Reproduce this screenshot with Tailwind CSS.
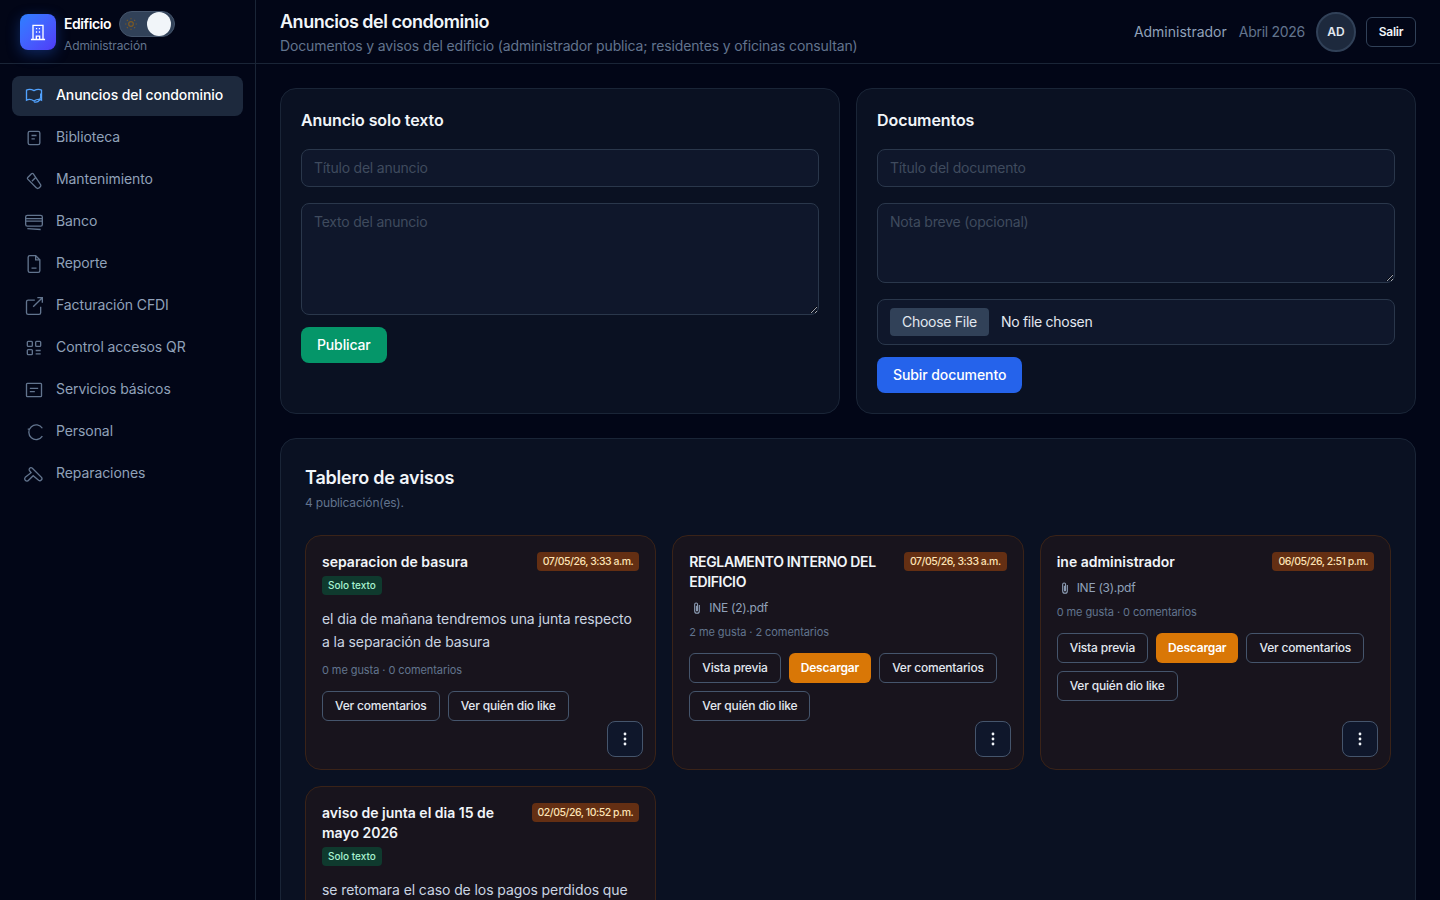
<!DOCTYPE html>
<html lang="es">
<head>
<meta charset="utf-8">
<title>Anuncios del condominio</title>
<script src="https://cdn.jsdelivr.net/npm/@tailwindcss/browser@4"></script>
</head>
<body class="h-[900px] overflow-hidden bg-[#020617] font-['Inter',sans-serif] text-slate-100">
<div class="flex h-[900px]">
  <aside class="flex w-[256px] shrink-0 flex-col border-r border-[#1a2537] bg-[#020617]">
    <div class="flex h-[64px] items-center gap-2 border-b border-[#1a2537] pl-5">
      <div class="flex h-9 w-9 items-center justify-center rounded-lg bg-gradient-to-br from-blue-500 to-indigo-600 shadow-[0_4px_14px_rgba(37,99,235,0.35)]">
        <svg class="h-5 w-5 text-white" fill="none" viewBox="0 0 24 24" stroke="currentColor" stroke-width="1.6"><path d="M6 21V4h12v17M3.500 21h17M9.500 8h1.500M13 8h1.500M9.500 12h1.500M13 12h1.500M10 21v-4h4v4"/></svg>
      </div>
      <div class="relative h-[40px] w-[130px]">
        <div class="absolute left-0 top-[2px] text-sm font-semibold tracking-[-0.03em] text-white">Edificio</div>
        <div class="absolute left-0 top-[26px] text-xs tracking-[-0.01em] text-slate-500">Administración</div>
        <div class="absolute left-[55px] top-[-1px] flex h-[26px] w-[56px] items-center justify-between rounded-full border border-slate-600 bg-slate-700 px-[3px]">
          <svg class="ml-[1px] h-[14px] w-[14px] text-[#7c5a22]" fill="none" viewBox="0 0 24 24" stroke="currentColor" stroke-width="2"><circle cx="12" cy="12" r="4"/><path d="M12 2v2M12 20v2M2 12h2M20 12h2M5 5l1.500 1.500M17.500 17.500 19 19M5 19l1.500-1.500M17.500 6.500 19 5"/></svg>
          <span class="h-6 w-6 rounded-full bg-slate-100"></span>
        </div>
      </div>
    </div>
    <nav class="flex flex-col gap-[2px] px-3 pt-3 text-sm tracking-[-0.006em] text-slate-400">
      <a class="flex h-10 items-center gap-3 rounded-lg bg-slate-800 px-3 font-medium text-white">
        <svg class="h-5 w-5 text-blue-400" fill="none" viewBox="0 0 24 24" stroke="currentColor" stroke-width="1.6"><path d="M3 5c3-1.500 6-1 9 .5 3-1.500 6-2 9-.5v12c-3-1.500-6-1-9 1-3-2-6-2.500-9-1z"/><path d="M20 9c1 6-2 12-8 10"/></svg>
        <span class="-mt-[2px]">Anuncios del condominio</span></a>
      <a class="flex h-10 items-center gap-3 px-3">
        <svg class="h-5 w-5 text-slate-500" fill="none" viewBox="0 0 24 24" stroke="currentColor" stroke-width="1.6"><rect x="5" y="4" width="14" height="16" rx="2"/><path d="M9 9h6M9 13h4"/></svg>
        <span class="-mt-[2px]">Biblioteca</span></a>
      <a class="flex h-10 items-center gap-3 px-3">
        <svg class="h-5 w-5 text-slate-500" fill="none" viewBox="0 0 24 24" stroke="currentColor" stroke-width="1.6"><path d="M9 4.500 4.500 9a1.500 1.500 0 0 0 0 2L15 21.500a2 2 0 0 0 3 0l1.500-1.500a2 2 0 0 0 0-3L11 4.500a1.500 1.500 0 0 0-2 0zM9.500 13.500 14 9"/></svg>
        <span class="-mt-[2px]">Mantenimiento</span></a>
      <a class="flex h-10 items-center gap-3 px-3">
        <svg class="h-5 w-5 text-slate-500" fill="none" viewBox="0 0 24 24" stroke="currentColor" stroke-width="1.6"><rect x="2" y="4" width="20" height="13" rx="2"/><path d="M2 8h20M2 11h20M4 20l16 1"/></svg>
        <span class="-mt-[2px]">Banco</span></a>
      <a class="flex h-10 items-center gap-3 px-3">
        <svg class="h-5 w-5 text-slate-500" fill="none" viewBox="0 0 24 24" stroke="currentColor" stroke-width="1.6"><path d="M14 2H7a2 2 0 0 0-2 2v16a2 2 0 0 0 2 2h10a2 2 0 0 0 2-2V7z"/><path d="M14 2v5h5M9 17h6"/></svg>
        <span class="-mt-[2px]">Reporte</span></a>
      <a class="flex h-10 items-center gap-3 px-3">
        <svg class="h-5 w-5 text-slate-500" fill="none" viewBox="0 0 24 24" stroke="currentColor" stroke-width="1.6"><path d="M13 5H5a2 2 0 0 0-2 2v13a2 2 0 0 0 2 2h13a2 2 0 0 0 2-2v-7M11 13 22 2M16 2h6v6"/></svg>
        <span class="-mt-[2px]">Facturación CFDI</span></a>
      <a class="flex h-10 items-center gap-3 px-3">
        <svg class="h-5 w-5 text-slate-500" fill="none" viewBox="0 0 24 24" stroke="currentColor" stroke-width="1.6"><rect x="4" y="4" width="6" height="6" rx="1"/><rect x="14" y="4" width="6" height="6" rx="1"/><rect x="4" y="14" width="6" height="6" rx="1"/><path d="M14 15h6M14 19h6"/></svg>
        <span class="-mt-[2px]">Control accesos QR</span></a>
      <a class="flex h-10 items-center gap-3 px-3">
        <svg class="h-5 w-5 text-slate-500" fill="none" viewBox="0 0 24 24" stroke="currentColor" stroke-width="1.6"><rect x="3" y="4" width="18" height="16" rx="1"/><path d="M7 10h10M7 14h6"/></svg>
        <span class="-mt-[2px]">Servicios básicos</span></a>
      <a class="flex h-10 items-center gap-3 px-3">
        <svg class="h-5 w-5 text-slate-500" fill="none" viewBox="0 0 24 24" stroke="currentColor" stroke-width="1.6"><path d="M22 7.500A8.800 8.800 0 1 0 22 17M4.500 8.500h2"/></svg>
        <span class="-mt-[2px]">Personal</span></a>
      <a class="flex h-10 items-center gap-3 px-3">
        <svg class="h-5 w-5 text-slate-500" fill="none" viewBox="0 0 24 24" stroke="currentColor" stroke-width="1.600"><path d="M10 5l11 11a2.500 2.500 0 0 1-3.500 3.500L11 14l-5.500 5.500A2.500 2.500 0 0 1 1.500 16L8.500 10.500 7 8.500A2.200 2.200 0 0 1 10 5z"/></svg>
        <span class="-mt-[2px]">Reparaciones</span></a>
    </nav>
  </aside>

  <div class="flex min-w-0 flex-1 flex-col">
    <header class="flex h-[64px] shrink-0 items-center justify-between border-b border-[#1a2537] bg-[#020617] pl-6 pr-6">
      <div class="pt-[2px]">
        <h1 class="text-lg font-semibold leading-6 tracking-[-0.027em] text-slate-100">Anuncios del condominio</h1>
        <p class="mt-[2px] text-sm leading-5 tracking-[-0.009em] text-slate-500">Documentos y avisos del edificio (administrador publica; residentes y oficinas consultan)</p>
      </div>
      <div class="flex items-center gap-3 text-sm">
        <span class="text-slate-400">Administrador</span>
        <span class="tracking-[-0.02em] text-slate-500">Abril 2026</span>
        <span class="ml-[-1px] flex h-10 w-10 items-center justify-center rounded-full border-2 border-slate-700 bg-slate-800 text-xs font-semibold text-slate-200">AD</span>
        <button class="ml-[-2px] h-[30px] w-[50px] rounded-md border border-slate-700 text-xs font-semibold tracking-[-0.02em] text-slate-100">Salir</button>
      </div>
    </header>

    <main class="flex-1 overflow-hidden p-6">
      <div class="grid grid-cols-2 gap-4">
        <section class="h-[326px] rounded-2xl border border-[#1a2537] bg-[#0a1122] p-5">
          <h2 class="mb-[18px] text-base font-semibold leading-[22px] tracking-[-0.005em] text-slate-100">Anuncio solo texto</h2>
          <input class="block h-[38px] w-full rounded-lg border border-[#2a374b] bg-slate-900 px-3 pb-[2px] text-sm tracking-[-0.015em] text-slate-100 placeholder:text-[#3f4b5e]" placeholder="Título del anuncio">
          <textarea class="mt-4 block h-[112px] w-full rounded-lg border border-[#2a374b] bg-slate-900 px-3 py-2 text-sm tracking-[-0.015em] placeholder:text-[#3f4b5e]" placeholder="Texto del anuncio"></textarea>
          <button class="mt-3 h-9 rounded-lg bg-[#059669] px-4 text-sm font-medium tracking-[-0.01em] text-white">Publicar</button>
        </section>
        <section class="h-[326px] rounded-2xl border border-[#1a2537] bg-[#0a1122] p-5">
          <h2 class="mb-[18px] text-base font-semibold leading-[22px] tracking-[-0.005em] text-slate-100">Documentos</h2>
          <input class="block h-[38px] w-full rounded-lg border border-[#2a374b] bg-slate-900 px-3 pb-[2px] text-sm tracking-[-0.015em] placeholder:text-[#3f4b5e]" placeholder="Título del documento">
          <textarea class="mt-4 block h-[80px] w-full rounded-lg border border-[#2a374b] bg-slate-900 px-3 py-2 text-sm tracking-[-0.015em] placeholder:text-[#3f4b5e]" placeholder="Nota breve (opcional)"></textarea>
          <div class="mt-4 flex h-[46px] items-center gap-3 rounded-lg border border-[#2a374b] bg-slate-900 px-3 text-sm tracking-[-0.02em] text-slate-200">
            <span class="flex h-7 items-center rounded bg-slate-700 px-3">Choose File</span>
            <span>No file chosen</span>
          </div>
          <button class="mt-3 h-9 rounded-lg bg-[#2563eb] px-4 text-sm font-medium tracking-[-0.006em] text-white">Subir documento</button>
        </section>
      </div>

      <section class="mt-6 h-[600px] rounded-2xl border border-[#1a2537] bg-[#0a1122] p-6">
        <h2 class="mt-[1px] text-lg font-semibold leading-7 tracking-[-0.01em] text-slate-100">Tablero de avisos</h2>
        <p class="mt-[1px] text-xs leading-5 tracking-[-0.014em] text-slate-500">4 publicación(es).</p>
        <div class="mt-[22px] grid grid-cols-3 gap-4">

          <article class="relative h-[235px] rounded-2xl border border-[#3a2318] bg-[#18141d] p-4">
            <div class="flex items-start justify-between gap-3">
              <h3 class="text-sm font-semibold leading-5 text-slate-100">separacion de basura</h3>
              <span class="shrink-0 rounded bg-[#642f13] px-[6px] py-[2px] text-[10.5px] font-medium leading-[15px] tracking-[-0.47px] text-[#fde3b5]">07/05/26, 3:33 a.m.</span>
            </div>
            <span class="mt-[4px] block w-fit rounded bg-[#0f3a2e] px-[6px] text-[10px] font-medium leading-[19px] text-[#a7f3d0]">Solo texto</span>
            <p class="mt-[12px] text-sm leading-[23px] tracking-[-0.09px] text-slate-300">el dia de mañana tendremos una junta respecto a la separación de basura</p>
            <p class="mt-[9px] text-[11px] leading-4 tracking-[-0.08px] text-slate-500">0 me gusta · 0 comentarios</p>
            <div class="mt-[13px] flex flex-wrap gap-2 tracking-[-0.18px]">
              <button class="h-[30px] rounded-md border border-slate-600 px-3 text-xs font-medium text-slate-200">Ver comentarios</button>
              <button class="h-[30px] rounded-md border border-slate-600 px-3 text-xs font-medium text-slate-200">Ver quién dio like</button>
            </div>
            <button class="absolute bottom-3 right-3 flex h-9 w-9 items-center justify-center rounded-lg border border-slate-600 bg-slate-900">
              <svg class="h-4 w-4 text-slate-100" fill="currentColor" viewBox="0 0 16 16"><circle cx="8" cy="3" r="1.400"/><circle cx="8" cy="8" r="1.400"/><circle cx="8" cy="13" r="1.400"/></svg>
            </button>
          </article>

          <article class="relative h-[235px] rounded-2xl border border-[#3a2318] bg-[#18141d] p-4">
            <div class="flex items-start justify-between gap-3">
              <h3 class="text-sm font-semibold leading-5 tracking-[-0.35px] text-slate-100">REGLAMENTO INTERNO DEL EDIFICIO</h3>
              <span class="shrink-0 rounded bg-[#642f13] px-[6px] py-[2px] text-[10.5px] font-medium leading-[15px] tracking-[-0.47px] text-[#fde3b5]">07/05/26, 3:33 a.m.</span>
            </div>
            <div class="mt-[6px] flex h-5 items-center gap-[5px] pl-[1px] text-xs tracking-[-0.27px] text-slate-400">
              <svg class="h-[14px] w-[14px]" fill="none" viewBox="0 0 24 24" stroke="currentColor" stroke-width="1.800"><path d="M16 7v10a4 4 0 0 1-8 0V6a2.500 2.500 0 0 1 5 0v10a1 1 0 0 1-2 0V8"/></svg>
              <span>INE (2).pdf</span>
            </div>
            <p class="mt-[6px] text-[11px] leading-4 tracking-[-0.08px] text-slate-500">2 me gusta · 2 comentarios</p>
            <div class="mt-[13px] flex flex-wrap gap-2 tracking-[-0.18px]">
              <button class="h-[30px] rounded-md border border-slate-600 px-3 text-xs font-medium text-slate-200">Vista previa</button>
              <button class="h-[30px] rounded-md bg-[#d97706] px-3 text-xs font-semibold text-white">Descargar</button>
              <button class="h-[30px] rounded-md border border-slate-600 px-3 text-xs font-medium text-slate-200">Ver comentarios</button>
              <button class="h-[30px] rounded-md border border-slate-600 px-3 text-xs font-medium text-slate-200">Ver quién dio like</button>
            </div>
            <button class="absolute bottom-3 right-3 flex h-9 w-9 items-center justify-center rounded-lg border border-slate-600 bg-slate-900">
              <svg class="h-4 w-4 text-slate-100" fill="currentColor" viewBox="0 0 16 16"><circle cx="8" cy="3" r="1.400"/><circle cx="8" cy="8" r="1.400"/><circle cx="8" cy="13" r="1.400"/></svg>
            </button>
          </article>

          <article class="relative h-[235px] rounded-2xl border border-[#3a2318] bg-[#18141d] p-4">
            <div class="flex items-start justify-between gap-3">
              <h3 class="text-sm font-semibold leading-5 text-slate-100">ine administrador</h3>
              <span class="shrink-0 rounded bg-[#642f13] px-[6px] py-[2px] text-[10.5px] font-medium leading-[15px] tracking-[-0.47px] text-[#fde3b5]">06/05/26, 2:51 p.m.</span>
            </div>
            <div class="mt-[6px] flex h-5 items-center gap-[5px] pl-[1px] text-xs tracking-[-0.27px] text-slate-400">
              <svg class="h-[14px] w-[14px]" fill="none" viewBox="0 0 24 24" stroke="currentColor" stroke-width="1.800"><path d="M16 7v10a4 4 0 0 1-8 0V6a2.500 2.500 0 0 1 5 0v10a1 1 0 0 1-2 0V8"/></svg>
              <span>INE (3).pdf</span>
            </div>
            <p class="mt-[6px] text-[11px] leading-4 tracking-[-0.08px] text-slate-500">0 me gusta · 0 comentarios</p>
            <div class="mt-[13px] flex flex-wrap gap-2 tracking-[-0.18px]">
              <button class="h-[30px] rounded-md border border-slate-600 px-3 text-xs font-medium text-slate-200">Vista previa</button>
              <button class="h-[30px] rounded-md bg-[#d97706] px-3 text-xs font-semibold text-white">Descargar</button>
              <button class="h-[30px] rounded-md border border-slate-600 px-3 text-xs font-medium text-slate-200">Ver comentarios</button>
              <button class="h-[30px] rounded-md border border-slate-600 px-3 text-xs font-medium text-slate-200">Ver quién dio like</button>
            </div>
            <button class="absolute bottom-3 right-3 flex h-9 w-9 items-center justify-center rounded-lg border border-slate-600 bg-slate-900">
              <svg class="h-4 w-4 text-slate-100" fill="currentColor" viewBox="0 0 16 16"><circle cx="8" cy="3" r="1.400"/><circle cx="8" cy="8" r="1.400"/><circle cx="8" cy="13" r="1.400"/></svg>
            </button>
          </article>

          <article class="relative h-[235px] rounded-2xl border border-[#3a2318] bg-[#18141d] p-4">
            <div class="flex items-start justify-between gap-3">
              <h3 class="text-sm font-semibold leading-5 text-slate-100">aviso de junta el dia 15 de mayo 2026</h3>
              <span class="shrink-0 rounded bg-[#642f13] px-[6px] py-[2px] text-[10.5px] font-medium leading-[15px] tracking-[-0.47px] text-[#fde3b5]">02/05/26, 10:52 p.m.</span>
            </div>
            <span class="mt-[4px] block w-fit rounded bg-[#0f3a2e] px-[6px] text-[10px] font-medium leading-[19px] text-[#a7f3d0]">Solo texto</span>
            <p class="mt-[12px] text-sm leading-[23px] tracking-[-0.09px] text-slate-300">se retomara el caso de los pagos perdidos que</p>
          </article>

        </div>
      </section>
    </main>
  </div>
</div>
</body>
</html>
